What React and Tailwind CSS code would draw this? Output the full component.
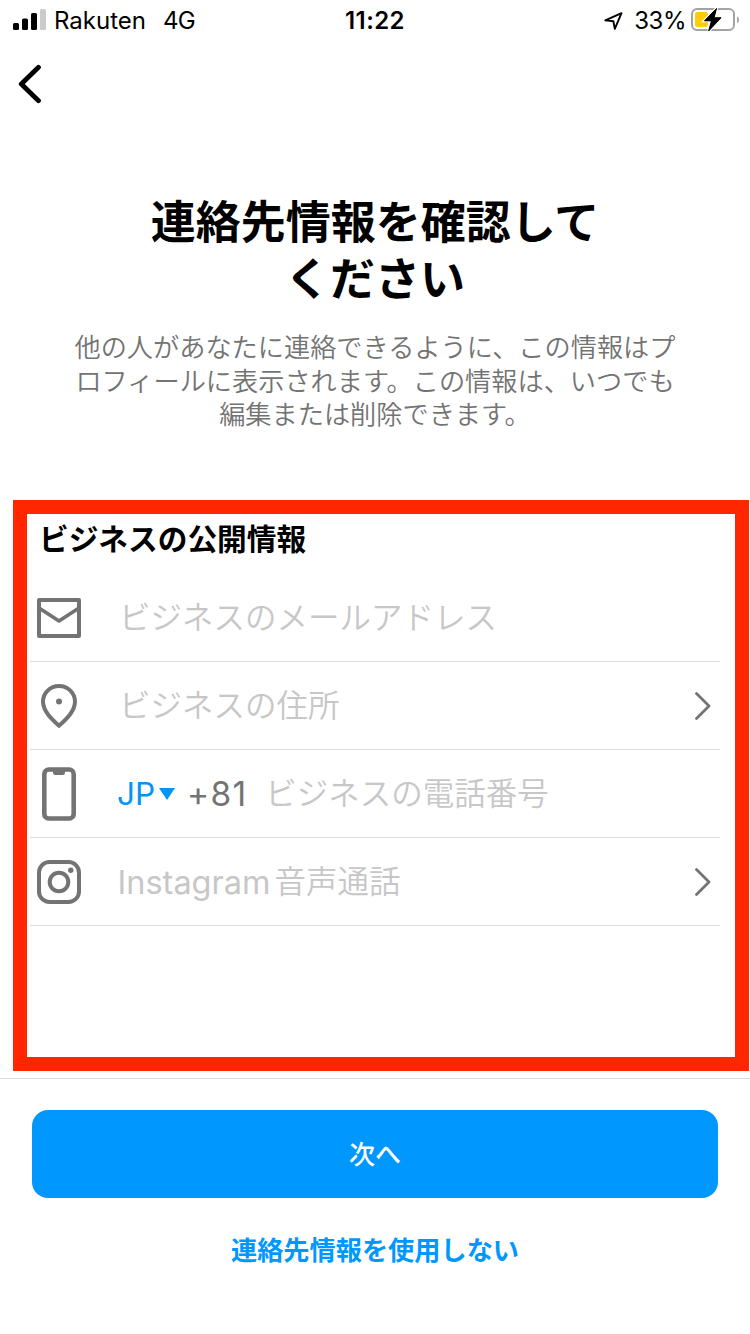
import clsx from 'clsx';

function SignalIcon() {
  return (
    <svg width="34" height="22" viewBox="0 0 34 22">
      <rect x="0" y="14" width="6" height="7" rx="1.5" />
      <rect x="9" y="9.5" width="6" height="11.5" rx="1.5" />
      <rect x="18" y="4" width="6" height="17" rx="1.5" />
      <rect x="27" y="0" width="6" height="21" rx="1.5" fill="#cbcbcb" />
    </svg>
  );
}

function LocationIcon() {
  return (
    <svg width="20" height="20" viewBox="0 0 20 20" fill="none" stroke="black" strokeWidth="1.9" strokeLinejoin="round">
      <path d="M2.3 10.4 18.5 3.200 11.800 18.800 10.400 11.200Z" />
    </svg>
  );
}

function BatteryIcon() {
  return (
    <svg width="49" height="24" viewBox="0 0 49 24" fill="none">
      <rect x="1" y="1" width="42" height="21" rx="5" stroke="#a3a3a3" strokeWidth="2" />
      <path d="M46 8.5v6.500c1.500-.5 2-1.800 2-3.200s-.5-2.800-2-3.300Z" fill="#a3a3a3" />
      <rect x="4" y="4" width="13" height="15" rx="2.500" fill="#ffcc0a" />
      <path d="M25.500.5 13.500 12.800h7L17.600 23 30 9.800h-7Z" fill="black" stroke="white" strokeWidth="3" paintOrder="stroke" />
      <path d="M25.500.5 13.500 12.800h7L17.600 23 30 9.800h-7Z" fill="black" stroke="black" strokeWidth="1" strokeLinejoin="round" />
    </svg>
  );
}

function MailIcon() {
  return (
    <svg width="44" height="40" viewBox="0 0 44 40" fill="none" stroke="#737373" strokeWidth="4" strokeLinejoin="round">
      <rect x="2" y="2" width="40" height="36" />
      <path d="M2 10 22 23 42 10" strokeWidth="3.600" />
    </svg>
  );
}

function PinIcon() {
  return (
    <svg width="36" height="44" viewBox="0 0 36 44" fill="none" stroke="#737373" strokeWidth="4" strokeLinejoin="round">
      <path d="M18 2C9 2 2 9 2 17.600 2 27 10 34.500 18 41.800 26 34.500 34 27 34 17.600 34 9 27 2 18 2Z" />
      <circle cx="18" cy="17.500" r="3" fill="#737373" stroke="none" />
    </svg>
  );
}

function PhoneIcon() {
  return (
    <svg width="34" height="54" viewBox="0 0 34 54" fill="none">
      <rect x="2.300" y="2.500" width="29.400" height="49" rx="4.500" stroke="#737373" strokeWidth="4.600" />
      <path d="M11 4h12v1.500a2.500 2.500 0 0 1-2.500 2.500h-7A2.500 2.500 0 0 1 11 5.500Z" fill="#737373" />
    </svg>
  );
}

function InstagramIcon() {
  return (
    <svg width="44" height="44" viewBox="0 0 44 44" fill="none" stroke="#737373" strokeWidth="4">
      <rect x="2" y="2" width="40" height="40" rx="10.500" />
      <circle cx="22" cy="22" r="9.300" />
      <circle cx="33.800" cy="10.300" r="2.700" fill="#737373" stroke="none" />
    </svg>
  );
}

function ChevronIcon() {
  return (
    <svg width="16" height="28" viewBox="0 0 16 28" fill="none" stroke="#737373" strokeWidth="2.800" strokeLinecap="round" strokeLinejoin="round">
      <path d="M1.500 1.500 14 14 1.500 26.500" />
    </svg>
  );
}

function Row({ icon, chevron, children }) {
  return (
    <div className="flex h-[88px] items-center border-b border-[#dbdbdb] pr-[9px]">
      <div className="flex w-[58px] shrink-0 justify-center">{icon}</div>
      <div className="flex flex-1 items-center pl-[31px] text-[31.5px] whitespace-nowrap text-[#c7c7c7]">{children}</div>
      {chevron && <ChevronIcon />}
    </div>
  );
}

const font = "font-['Inter','Noto_Sans_CJK_JP',sans-serif]";

export default function App() {
  return (
    <div lang="ja" className={clsx('flex h-[1334px] w-[750px] flex-col bg-white text-black', font)}>
      <header className="grid h-10 shrink-0 grid-cols-3 items-center pr-[10px] pl-[13px] text-[24px] leading-none">
        <div className="flex items-center">
          <SignalIcon />
          <span className="ml-[7px] pt-[2px]">Rakuten</span>
          <span className="ml-[17px] pt-[2px] tracking-[-0.7px]">4G</span>
        </div>
        <span className="pt-[2px] pr-[3px] text-center font-semibold tracking-[0.4px]">11:22</span>
        <div className="flex items-center justify-end">
          <LocationIcon />
          <span className="mr-[5px] ml-[11px] pt-[2px] tracking-[-0.5px]">33%</span>
          <BatteryIcon />
        </div>
      </header>

      <nav className="flex h-[88px] shrink-0 items-center pl-[18px]">
        <button aria-label="戻る">
          <svg width="24" height="40" viewBox="0 0 24 40" fill="none" stroke="black" strokeWidth="4.800" strokeLinecap="round" strokeLinejoin="round">
            <path d="M20.500 3.300 3.300 20 20.500 36.700" />
          </svg>
        </button>
      </nav>

      <div className="h-[372px] shrink-0 pt-[66px] text-center">
        <h1 className="text-[45px] leading-[57px] font-bold">
          連絡先情報を確認して
          <br />
          ください
        </h1>
        <p className="mt-[23px] text-[26.2px] leading-[33.5px] font-[350] text-[#737373]">
          他の人があなたに連絡できるように、この情報はプ
          <br />
          ロフィールに表示されます。この情報は、いつでも
          <br />
          編集または削除できます。
        </p>
      </div>

      <section className="mr-px ml-[13px] h-[571px] shrink-0 border-[14px] border-[#ff2600] pr-[15px] pl-[3px]">
        <h2 className="h-[60px] pl-[9px] text-[29.7px] leading-[50px] font-bold">ビジネスの公開情報</h2>
        <Row icon={<MailIcon />}>
          <span className="font-[350]">ビジネスのメールアドレス</span>
        </Row>
        <Row icon={<PinIcon />} chevron>
          <span className="font-[350]">ビジネスの住所</span>
        </Row>
        <Row icon={<PhoneIcon />}>
          <span className="-ml-[2px] text-[#0095f6]">JP</span>
          <svg width="16" height="12" viewBox="0 0 16 12" className="ml-[4px]" fill="#0095f6">
            <path d="M0 0h16L8 12Z" />
          </svg>
          <span className="ml-[12px] pt-[2px] text-[33.5px] tracking-[1.2px] text-[#737373]">+81</span>
          <span className="ml-[18px] font-[350]">ビジネスの電話番号</span>
        </Row>
        <Row icon={<InstagramIcon />} chevron>
          <span className="-ml-[1.5px] pt-[3px] text-[32.5px]">Instagram</span>
          <span className="ml-[4px] font-[350]">音声通話</span>
        </Row>
      </section>

      <footer className="mt-[7px] flex flex-1 flex-col border-t border-[#dbdbdb] px-8 pt-[31px]">
        <button className="h-[88px] rounded-[16px] bg-[#0098ff] text-[26px] font-medium text-white">次へ</button>
        <button className="mt-[33px] h-10 text-[26.2px] leading-10 font-bold text-[#0098ff]">連絡先情報を使用しない</button>
      </footer>
    </div>
  );
}
